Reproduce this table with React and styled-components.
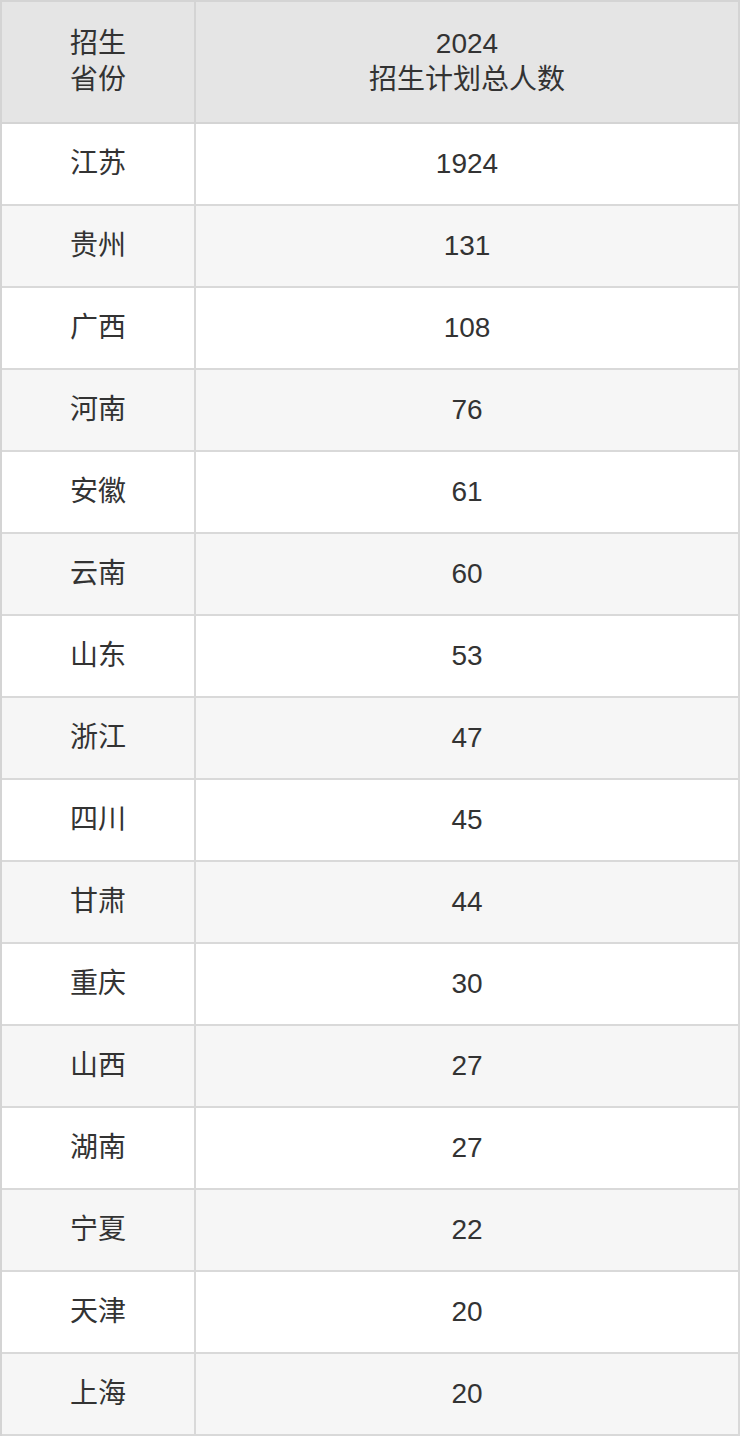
import styled, { createGlobalStyle } from "styled-components";

const GlobalStyle = createGlobalStyle`
  html, body {
    margin: 0;
    padding: 0;
    background: #ffffff;
  }
  body {
    font-family: "Liberation Sans", Arial, "Noto Sans CJK SC", sans-serif;
    color: #333333;
  }
`;

const rows = [
  ["江苏", "1924"],
  ["贵州", "131"],
  ["广西", "108"],
  ["河南", "76"],
  ["安徽", "61"],
  ["云南", "60"],
  ["山东", "53"],
  ["浙江", "47"],
  ["四川", "45"],
  ["甘肃", "44"],
  ["重庆", "30"],
  ["山西", "27"],
  ["湖南", "27"],
  ["宁夏", "22"],
  ["天津", "20"],
  ["上海", "20"],
];

export default function App() {
  return (
    <>
      <GlobalStyle />
      <Table>
        <thead>
          <tr>
            <HeadCell $narrow>
              招生
              <br />
              省份
            </HeadCell>
            <HeadCell>
              2024
              <br />
              招生计划总人数
            </HeadCell>
          </tr>
        </thead>
        <tbody>
          {rows.map(([prov, num], i) => (
            <Row key={prov + i} $striped={i % 2 === 1}>
              <Cell $narrow>{prov}</Cell>
              <Cell>{num}</Cell>
            </Row>
          ))}
        </tbody>
      </Table>
    </>
  );
}

const Table = styled.table`
  width: 740px;
  border-collapse: separate;
  border-spacing: 0;
  border-top: 2px solid #d4d4d4;
  border-left: 2px solid #d4d4d4;
  font-size: 28px;
  line-height: 36px;
  table-layout: fixed;
`;

const HeadCell = styled.th`
  width: ${(p) => (p.$narrow ? "192px" : "auto")};
  padding: 24px 0;
  background: #e5e5e5;
  font-weight: 400;
  text-align: center;
  color: #333333;
  border-right: 2px solid #d4d4d4;
  border-bottom: 2px solid #d4d4d4;
`;

const Row = styled.tr`
  background: ${(p) => (p.$striped ? "#f6f6f6" : "#ffffff")};
`;

const Cell = styled.td`
  width: ${(p) => (p.$narrow ? "192px" : "auto")};
  padding: 22px 0;
  text-align: center;
  color: #333333;
  border-right: 2px solid #d9d9d9;
  border-bottom: 2px solid #d9d9d9;
`;
